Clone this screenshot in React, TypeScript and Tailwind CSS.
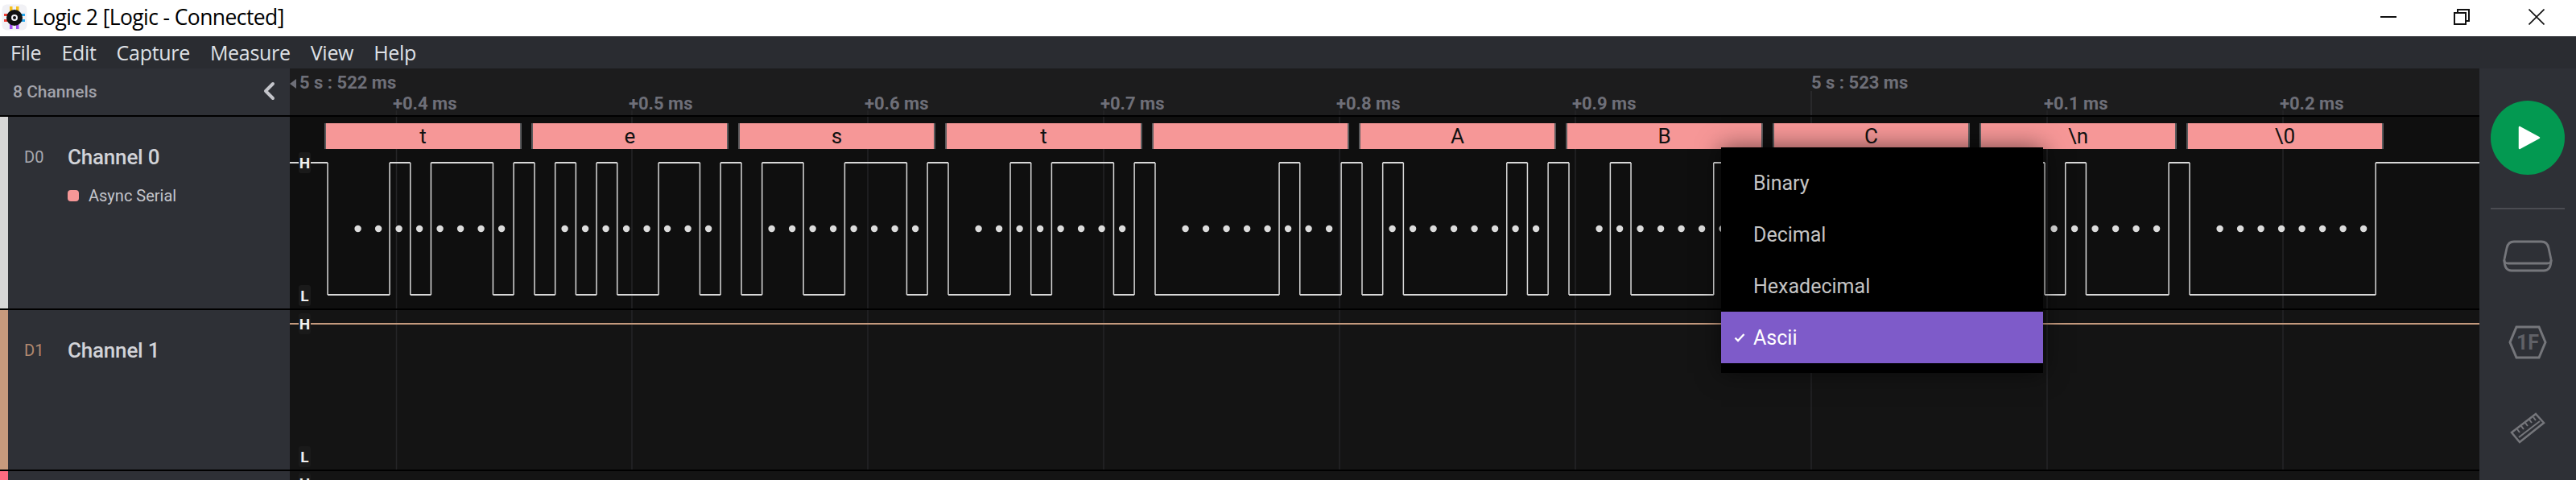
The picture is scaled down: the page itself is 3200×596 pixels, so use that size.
import React from "react";

const TITLE_FONT = "[font-family:'Open_Sans','Noto_Sans',sans-serif]";

const CHARS = ["t", "e", "s", "t", " ", "A", "B", "C", "\n", "\0"];
const LABELS = ["t", "e", "s", "t", "", "A", "B", "C", "\\n", "\\0"];
const FRAME_PERIOD = 257;
const BIT = 25.68;
const FIRST_FALL = 47;
const WIDTH = 2720;
const GRID = [132.5, 425, 718, 1011, 1304, 1597, 1890, 2183, 2476];

function buildWave(high: number, low: number) {
  let x = 0;
  let level = 1;
  const h: string[] = [];
  const v: string[] = [];
  CHARS.forEach((c, i) => {
    const start = FIRST_FALL + FRAME_PERIOD * i;
    const code = c.charCodeAt(0);
    h.push(`M${x} ${high}H${start}`);
    v.push(`M${start} ${high}V${low}`);
    x = start;
    level = 0;
    for (let b = 0; b < 8; b++) {
      const bit = (code >> b) & 1;
      const pos = start + BIT * (b + 1);
      if (bit !== level) {
        h.push(`M${x} ${level ? high : low}H${pos}`);
        v.push(`M${pos} ${high}V${low}`);
        x = pos;
        level = bit;
      }
    }
    const stop = start + BIT * 9;
    if (level === 0) {
      h.push(`M${x} ${low}H${stop}`);
      v.push(`M${stop} ${high}V${low}`);
      x = stop;
      level = 1;
    }
  });
  h.push(`M${x} ${high}H${WIDTH}`);
  return { h: h.join(""), v: v.join("") };
}

function GridLines({ y1, y2 }: { y1: number; y2: number }) {
  return (
    <>
      {GRID.map((x) => (
        <line key={x} x1={x} x2={x} y1={y1} y2={y2} stroke="#252527" strokeWidth="1.5" />
      ))}
    </>
  );
}

function LevelBadge({ text, top }: { text: string; top: string }) {
  return (
    <span
      className={`absolute left-[11px] ${top} flex h-[26px] w-[15px] items-center justify-center rounded-[3px] bg-[#1a1a1a] text-[19px] font-bold leading-none text-[#f0f0f0] [font-family:Roboto,sans-serif]`}
    >
      {text}
    </span>
  );
}

function DigitalRow() {
  const wave = buildWave(57, 221);
  return (
    <div className="relative h-[238px] bg-[#0f0f0f]">
      <svg className="absolute inset-0" width={WIDTH} height={238}>
        <GridLines y1={0} y2={238} />
        <path d={wave.h} stroke="#d8d8d8" strokeWidth="2" fill="none" />
        <path d={wave.v} stroke="#d8d8d8" strokeWidth="1.5" fill="none" />
        {CHARS.map((_, i) =>
          Array.from({ length: 8 }).map((__, k) => (
            <circle
              key={`${i}-${k}`}
              cx={FIRST_FALL + FRAME_PERIOD * i + 37.6 + 25.5 * k}
              cy={139}
              r={4.2}
              fill="#dcdcdc"
            />
          )),
        )}
      </svg>
      <div className="relative flex gap-[12px] pl-[43px] pt-[8px]">
        {LABELS.map((l, i) => (
          <div
            key={i}
            className="flex h-[32px] w-[245px] items-center justify-center border-x-2 border-[#5a5a5c] bg-[#f69797] text-[26px] leading-none text-[#111] [font-family:Roboto,sans-serif]"
          >
            {l}
          </div>
        ))}
      </div>
      <LevelBadge text="H" top="top-[44px]" />
      <LevelBadge text="L" top="top-[209px]" />
    </div>
  );
}

function AnalogEmptyRow() {
  return (
    <div className="relative h-[198px] bg-[#141414]">
      <svg className="absolute inset-0" width={WIDTH} height={198}>
        <GridLines y1={0} y2={198} />
        <line x1={0} x2={WIDTH} y1={17} y2={17} stroke="#c49a7e" strokeWidth="2" />
      </svg>
      <LevelBadge text="H" top="top-[4px]" />
      <LevelBadge text="L" top="top-[169px]" />
    </div>
  );
}

function FormatMenu() {
  const items = ["Binary", "Decimal", "Hexadecimal"];
  return (
    <div className="absolute left-[1778px] top-[98px] w-[400px] bg-black py-[12px] text-[25px] leading-none shadow-[0_0_28px_rgba(0,0,0,0.55)] [font-family:Roboto,sans-serif]">
      {items.map((t) => (
        <div key={t} className="flex h-[64px] items-center pl-[40px] text-[#c4c4c4]">
          {t}
        </div>
      ))}
      <div className="relative flex h-[64px] items-center bg-[#7e5bc9] pl-[40px] text-white">
        <svg className="absolute left-[16px] top-[26px]" width="14" height="12" viewBox="0 0 14 12">
          <path d="M1.5 6.5L5 10L12.5 2" stroke="#fff" strokeWidth="2.4" fill="none" />
        </svg>
        Ascii
      </div>
    </div>
  );
}

function Timeline() {
  return (
    <div className="relative min-w-0 flex-1 overflow-hidden bg-black">
      <div className="relative h-[58px] bg-[#1c1c1d]">
        <svg className="absolute inset-0" width={WIDTH} height={58}>
          <GridLines y1={52} y2={58} />
          <line x1={1890} x2={1890} y1={28} y2={58} stroke="#2e2e30" strokeWidth="1.5" />
        </svg>
        <div className="relative flex h-[29px] items-end text-[22px] font-bold leading-none text-[#6e6f78] [font-family:Roboto,sans-serif]">
          <svg width="12" height="14" viewBox="0 0 12 14" className="mb-[3px]">
            <path d="M0 7L8 1V13Z" fill="#6e6f78" />
          </svg>
          <span className="w-[1878px]">5 s : 522 ms</span>
          <span>5 s : 523 ms</span>
        </div>
        <div className="relative flex h-[29px] items-center pl-[128px] text-[22px] font-bold leading-none text-[#6e6f78] [font-family:Roboto,sans-serif]">
          {["+0.4 ms", "+0.5 ms", "+0.6 ms", "+0.7 ms", "+0.8 ms", "+0.9 ms", "", "+0.1 ms", "+0.2 ms"].map((t, i) => (
            <span key={i} className="w-[293px] shrink-0">
              {t}
            </span>
          ))}
        </div>
      </div>
      <div className="mt-[2px]">
        <DigitalRow />
      </div>
      <div className="mt-[2px]">
        <AnalogEmptyRow />
      </div>
      <div className="relative mt-[2px] h-[11px] bg-[#141414]">
        <LevelBadge text="H" top="top-[2px]" />
      </div>
      <FormatMenu />
    </div>
  );
}

function ChannelCell({
  name,
  code,
  strip,
  codeColor,
  height,
  children,
}: {
  name: string;
  code: string;
  strip: string;
  codeColor: string;
  height: string;
  children?: React.ReactNode;
}) {
  return (
    <div className={`flex ${height} bg-[#2e3036]`}>
      <div className={`w-[10px] shrink-0 ${strip}`} />
      <div className="flex-1 pl-[20px] pt-[36px] [font-family:Roboto,sans-serif]">
        <div className="flex h-[28px] items-center">
          <span className={`w-[54px] text-[20px] leading-none ${codeColor}`}>{code}</span>
          <span className="text-[26px] font-medium leading-none tracking-[-0.2px] text-[#d2d3d8]">{name}</span>
        </div>
        {children}
      </div>
    </div>
  );
}

function Sidebar() {
  return (
    <div className="w-[360px] shrink-0 bg-black [font-family:Roboto,sans-serif]">
      <div className="flex h-[58px] items-center justify-between bg-[#2e3036] pl-[16px] pr-[18px]">
        <span className="text-[21px] font-medium leading-none text-[#a2a3ab]">8 Channels</span>
        <svg width="16" height="24" viewBox="0 0 16 24" className="mt-[-2px]">
          <path d="M13 3L4 12L13 21" stroke="#c4c5cb" strokeWidth="4" fill="none" strokeLinecap="round" strokeLinejoin="round" />
        </svg>
      </div>
      <div className="mt-[2px]">
        <ChannelCell name="Channel 0" code="D0" strip="bg-[#d6d6d6]" codeColor="text-[#a8a9b0]" height="h-[238px]">
          <div className="ml-[54px] mt-[24px] flex items-center gap-[12px]">
            <span className="h-[14px] w-[14px] rounded-[4px] bg-[#f69797]" />
            <span className="text-[20px] leading-none text-[#c4c5cb]">Async Serial</span>
          </div>
        </ChannelCell>
      </div>
      <div className="mt-[2px]">
        <ChannelCell name="Channel 1" code="D1" strip="bg-[#c69a7d]" codeColor="text-[#b38a70]" height="h-[198px]" />
      </div>
      <div className="mt-[2px] flex h-[11px] bg-[#2e3036]">
        <div className="w-[10px] bg-[#ff6b81]" />
      </div>
    </div>
  );
}

function RightRail() {
  return (
    <div className="flex w-[120px] shrink-0 flex-col items-center bg-[#2e3036] pt-[40px]">
      <div className="flex h-[92px] w-[92px] items-center justify-center rounded-full bg-[#039951]">
        <svg width="28" height="30" viewBox="0 0 28 30" className="ml-[4px]">
          <path d="M2 2L26 15L2 28Z" fill="#fff" stroke="#fff" strokeWidth="2.5" strokeLinejoin="round" />
        </svg>
      </div>
      <div className="mt-[41px] h-[2px] w-[92px] bg-[#4b4c52]" />
      <svg className="mt-[38px]" width="62" height="40" viewBox="0 0 62 40" fill="none" stroke="#75767b" strokeWidth="2.8">
        <path d="M14 2H48C53 2 56 5 57 10L60 24C61 28 58 29 55 29H7C4 29 1 28 2 24L5 10C6 5 9 2 14 2Z" />
        <path d="M2 25C2 32 4 38 11 38H51C58 38 60 32 60 25" />
      </svg>
      <svg className="mt-[66px]" width="48" height="42" viewBox="0 0 48 42" fill="none">
        <path d="M10 2H38L46 21L38 40H10L2 21Z" stroke="#75767b" strokeWidth="3" />
        <text x="24" y="30" textAnchor="middle" fill="#606167" fontSize="25" fontWeight="700" fontFamily="Roboto, sans-serif">1F</text>
      </svg>
      <svg className="mt-[66px]" width="44" height="40" viewBox="0 0 44 40" fill="none" stroke="#75767b" strokeWidth="2">
        <path d="M2 25L32 2L42 13L12 37Z" strokeWidth="2.5" />
        <path d="M11 31L37 11" />
        <path d="M9 21L12 25M14 17L17 21M19 13L22 17M24 9L27 13M29 6L32 10" />
      </svg>
    </div>
  );
}

function WindowTitleBar() {
  return (
    <div className="flex h-[45px] items-center bg-white">
      <svg width="32" height="33" viewBox="0 0 32 33" className="ml-[2px] mt-[-3px]">
        <rect x="0.5" y="0.5" width="31" height="32" rx="6" fill="#f1f1f5" />
        <rect x="10" y="3" width="3.5" height="6" fill="#f6c11f" />
        <rect x="18" y="3" width="3.5" height="6" fill="#f6c11f" />
        <rect x="3" y="12" width="6" height="3" fill="#ee4036" />
        <rect x="3" y="19" width="6" height="3" fill="#ee4036" />
        <rect x="23" y="12" width="6" height="3" fill="#29a9ef" />
        <rect x="23" y="19" width="6" height="3" fill="#29a9ef" />
        <rect x="10" y="25" width="3.5" height="6" fill="#a24ff0" />
        <rect x="18" y="25" width="3.5" height="6" fill="#a24ff0" />
        <circle cx="16" cy="17" r="10" fill="#111" />
        <circle cx="16" cy="17" r="4" fill="#f1f1f5" />
        <circle cx="16" cy="17" r="2" fill="#111" />
      </svg>
      <span className={`ml-[6px] mt-[-2px] text-[26.5px] leading-none tracking-[-0.6px] text-black ${TITLE_FONT}`}>Logic 2 [Logic - Connected]</span>
      <div className="ml-auto mt-[-3px] flex items-center">
        <svg width="20" height="2" className="mr-[71px]">
          <rect width="20" height="2" fill="#111" />
        </svg>
        <svg width="20" height="20" viewBox="0 0 20 20" fill="none" stroke="#111" strokeWidth="2" className="mr-[73px]">
          <rect x="1" y="5" width="14" height="14" />
          <path d="M5 5V1H19V15H15" />
        </svg>
        <svg width="20" height="20" viewBox="0 0 20 20" fill="none" stroke="#111" strokeWidth="1.6" className="mr-[39px]">
          <path d="M0.5 0.5L19.5 19.5M19.5 0.5L0.5 19.5" />
        </svg>
      </div>
    </div>
  );
}

function MenuBar() {
  const items = ["File", "Edit", "Capture", "Measure", "View", "Help"];
  return (
    <div className={`flex h-[40px] items-center gap-[25px] bg-[#2a2c31] pl-[13px] text-[25px] leading-none tracking-[-0.3px] text-[#dfe1e6] ${TITLE_FONT}`}>
      {items.map((m) => (
        <span key={m}>{m}</span>
      ))}
    </div>
  );
}

export default function App() {
  return (
    <div className="flex h-[596px] w-[3200px] flex-col overflow-hidden bg-black">
      <WindowTitleBar />
      <MenuBar />
      <div className="flex min-h-0 flex-1">
        <Sidebar />
        <Timeline />
        <RightRail />
      </div>
    </div>
  );
}
